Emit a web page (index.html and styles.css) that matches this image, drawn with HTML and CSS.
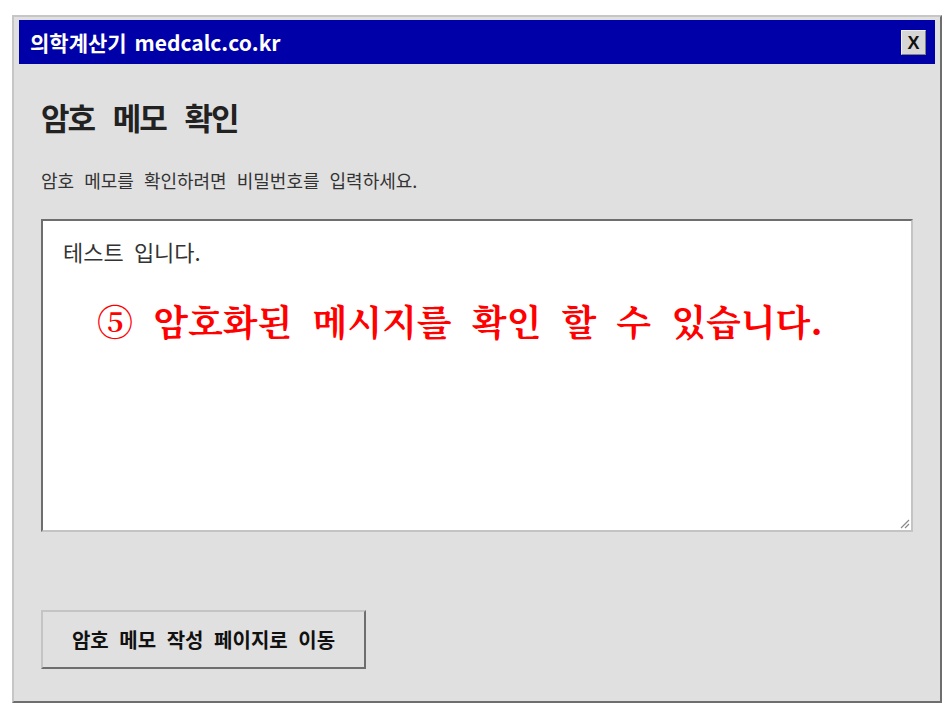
FILE: index.html
```html
<!DOCTYPE html>
<html lang="ko">
<head>
<meta charset="utf-8">
<title>의학계산기 medcalc.co.kr</title>
<link rel="stylesheet" href="styles.css">
</head>
<body>
<div class="window">
  <div class="titlebar">
    <span class="title">의학계산기 medcalc.co.kr</span>
    <button class="close" type="button">X</button>
  </div>
  <div class="content">
    <h1 class="heading">암호 메모 확인</h1>
    <p class="desc">암호 메모를 확인하려면 비밀번호를 입력하세요.</p>
    <div class="memo">
      <div class="memo-text">테스트 입니다.</div>
      <svg class="grip" width="12" height="12" viewBox="0 0 12 12"><path d="M11 3 L3 11 M11 7 L7 11" stroke="#8a8a8a" stroke-width="1.2" fill="none"/></svg>
    </div>
    <div class="spacer"></div>
    <button class="action" type="button">암호 메모 작성 페이지로 이동</button>
  </div>
</div>
<div class="annotation">⑤ 암호화된 메시지를 확인 할 수 있습니다.</div>
</body>
</html>
```
FILE: styles.css
```css
html, body {
  margin: 0;
  padding: 0;
  background: #ffffff;
}
body {
  font-family: "Noto Sans CJK KR", "Noto Sans", sans-serif;
  color: #222;
  position: relative;
  width: 952px;
  height: 721px;
  overflow: hidden;
}
.window {
  box-sizing: border-box;
  margin: 15px 0 0 12px;
  width: 930px;
  height: 688px;
  border: 2px solid;
  border-color: #c6c6c6 #6e6e6e #6e6e6e #c6c6c6;
  background: #e0e0e0;
  padding: 3px 5px 0 5px;
  display: flex;
  flex-direction: column;
}
.titlebar {
  height: 44px;
  flex: 0 0 44px;
  background: #0000a8;
  display: flex;
  align-items: center;
  justify-content: space-between;
  padding: 0 9px 0 11px;
}
.title {
  color: #ffffff;
  font-weight: 700;
  font-size: 21px;
  letter-spacing: 0;
  word-spacing: 2px;
}
.close {
  box-sizing: border-box;
  width: 25px;
  height: 25px;
  padding: 0;
  margin-top: 1px;
  background: #d6d6d6;
  border: 1px solid;
  border-color: #f0f0f0 #808080 #808080 #f0f0f0;
  font-family: "Liberation Sans", sans-serif;
  font-weight: 700;
  font-size: 18px;
  color: #111;
  line-height: 22px;
}
.content {
  flex: 1;
  display: flex;
  flex-direction: column;
  padding: 33px 22px 32px 22px;
}
.heading {
  margin: 0;
  font-size: 31px;
  line-height: 40px;
  font-weight: 700;
  color: #222;
  letter-spacing: -2px;
  word-spacing: 12px;
}
.desc {
  margin: 33px 0 0 0;
  font-size: 18px;
  line-height: 20px;
  color: #333;
  word-spacing: 5px;
}
.memo {
  position: relative;
  box-sizing: border-box;
  margin-top: 29px;
  height: 313px;
  background: #ffffff;
  border: 2px solid;
  border-color: #6e6e6e #c4c4c4 #c4c4c4 #6e6e6e;
  padding: 16px 20px;
}
.memo-text {
  font-size: 22px;
  line-height: 28px;
  color: #333;
  word-spacing: 4px;
}
.grip {
  position: absolute;
  right: 1px;
  bottom: 1px;
}
.spacer {
  flex: 1;
}
.action {
  box-sizing: border-box;
  align-self: flex-start;
  width: 325px;
  height: 59px;
  background: #e0e0e0;
  border: 2px solid;
  border-color: #c4c4c4 #6e6e6e #6e6e6e #c4c4c4;
  font-family: "Noto Sans CJK KR", sans-serif;
  font-weight: 700;
  font-size: 20px;
  color: #111;
  word-spacing: 5px;
  padding: 0;
}
.annotation {
  position: absolute;
  left: 97px;
  top: 296px;
  font-family: "Noto Serif CJK KR", "Noto Sans CJK KR", serif;
  font-weight: 700;
  font-size: 36px;
  line-height: 50px;
  color: #ff0000;
  word-spacing: 9px;
  white-space: nowrap;
}
```
